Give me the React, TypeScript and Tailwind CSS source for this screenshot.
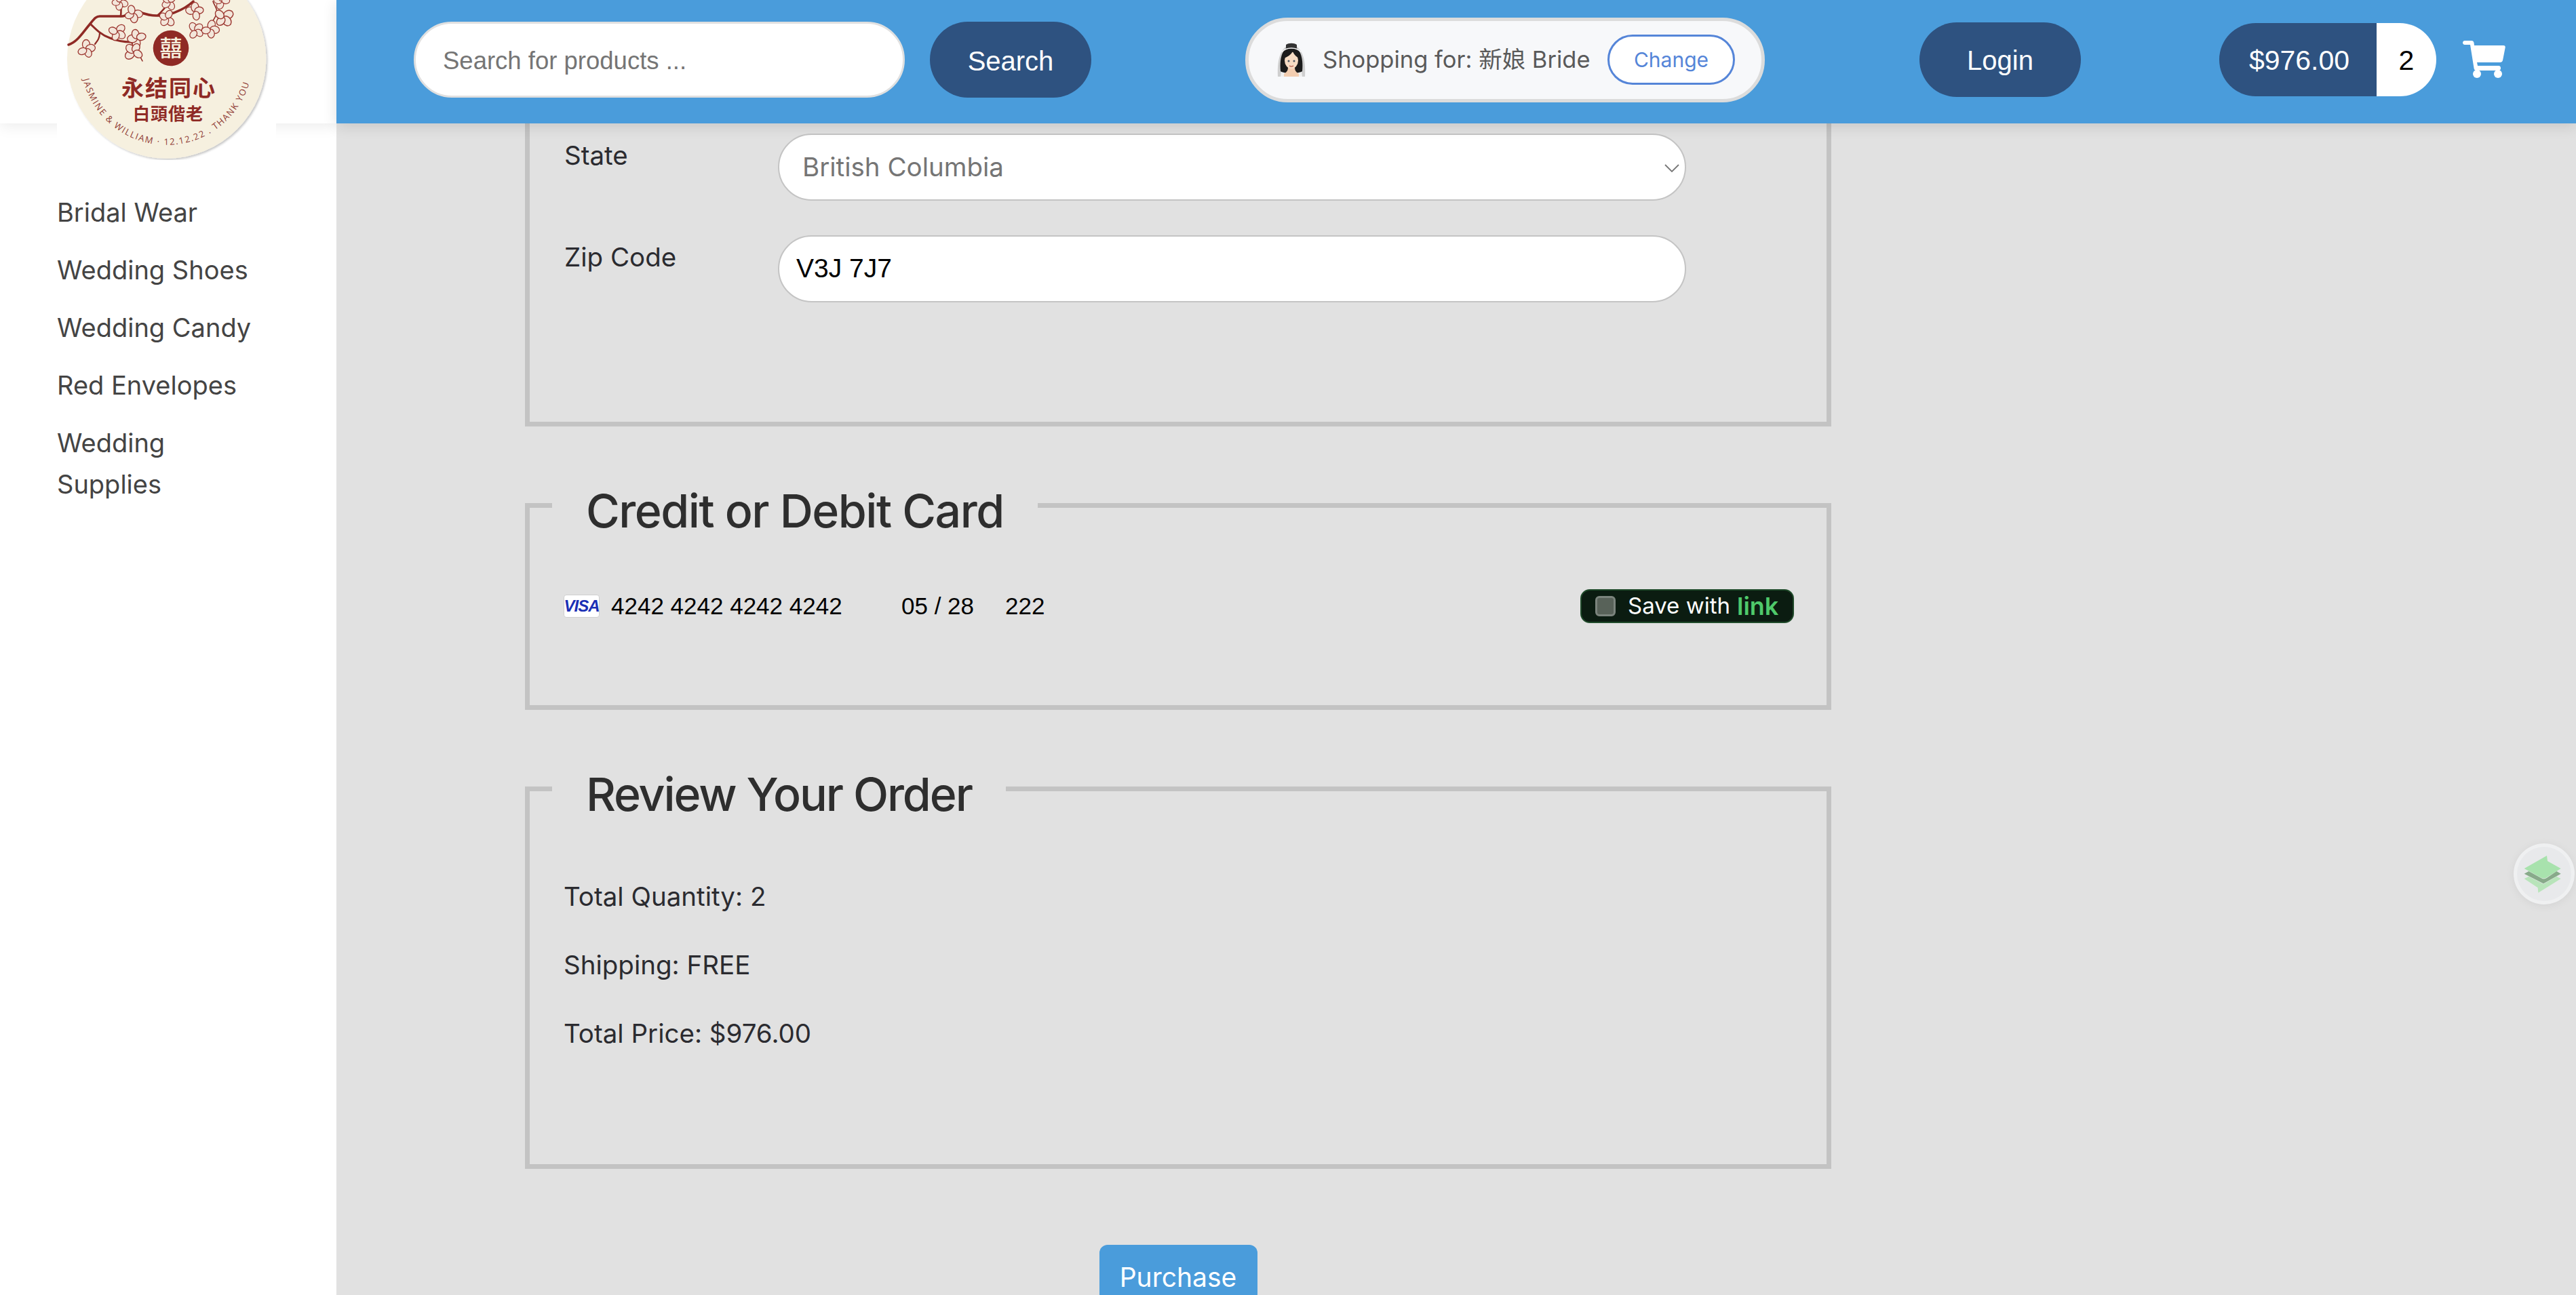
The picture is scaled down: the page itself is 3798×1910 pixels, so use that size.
// Round sticker logo, cropped by the top of the page
function WeddingLogo() {
  const branch = '#8f2a25';
  const flowers: [number, number, number][] = [
    [43, 72, 1], [89, 47, 1], [113, 20, 1], [163, 27, 0.95], [118, 57, 1.05], [113, 77, 1.05],
    [203, 17, 1], [204, 45, 0.95], [226, 43, 1], [246, 25, 1.1], [93, 3, 0.9], [166, 3, 0.9], [243, 2, 0.9],
  ];
  return (
    <svg viewBox="0 0 323 236" className="h-[236px] w-[323px]">
      <defs>
        <filter id="logoShadow" x="-10%" y="-10%" width="120%" height="120%">
          <feDropShadow dx="2" dy="2" stdDeviation="1.5" floodColor="#000" floodOpacity="0.22" />
        </filter>
        <path id="rimText" d="M 38.3 117 A 127 127 0 0 0 288.4 95" fill="none" />
      </defs>
      <circle cx="161.7" cy="87" r="146.7" fill="#f6f0df" filter="url(#logoShadow)" />
      {/* branches */}
      <g fill="none" stroke={branch} strokeLinecap="round" strokeLinejoin="round">
        <path d="M17 66 C30 62 38 48 49 35 C54 29 57 24 63 24 L96 24 C104 24 110 14 119 17 C128 20 138 24 149 23 C162 24 186 16 201 2" strokeWidth="3.5" />
        <path d="M49 35 C58 44 66 52 78 56 C88 60 98 62 109 62" strokeWidth="3" />
        <path d="M63 49 C63 56 60 60 56 65" strokeWidth="2.2" />
        <path d="M94 24 C95 16 94 12 95 6 M149 22 C156 16 160 10 166 3" strokeWidth="2.6" />
        <path d="M109 62 C114 68 118 74 126 90 M229 33 C232 26 236 22 236 18 C236 12 232 8 230 2" strokeWidth="1.6" />
      </g>
      {/* blossoms */}
      <g fill="#f3e6da" stroke="#9c3831" strokeWidth="1.3">
        {flowers.map(([x, y, s], i) => (
          <g key={i} transform={`translate(${x} ${y}) scale(${s}) rotate(${i * 47})`}>
            <ellipse cx="0" cy="-6.5" rx="5.5" ry="7" />
            <ellipse cx="6.5" cy="-1" rx="5.5" ry="7" transform="rotate(80 6.5 -1)" />
            <ellipse cx="3" cy="6" rx="5" ry="6.5" transform="rotate(160 3 6)" />
            <ellipse cx="-5.5" cy="3.5" rx="5" ry="6.5" transform="rotate(250 -5.5 3.5)" />
          </g>
        ))}
      </g>
      <circle cx="168" cy="71" r="26.3" fill="#8f2a25" />
      <text x="168" y="83" textAnchor="middle" fontSize="33" fontWeight="500" fill="#f6f0df" className="font-['Noto_Sans_CJK_TC',sans-serif]">囍</text>
      <text x="165" y="142" textAnchor="middle" fontSize="33" fontWeight="700" letterSpacing="2" fill="#8f2a25" className="font-['Noto_Sans_CJK_TC',sans-serif]">永结同心</text>
      <text x="164" y="177" textAnchor="middle" fontSize="25" fontWeight="700" letterSpacing="1" fill="#8f2a25" className="font-['Noto_Sans_CJK_TC',sans-serif]">白頭偕老</text>
      <text fontSize="13" letterSpacing="1.7" fontWeight="500" fill="#8f3a34" className="font-['Open_Sans',sans-serif]">
        <textPath href="#rimText">JASMINE &amp; WILLIAM · 12.12.22 . THANK YOU</textPath>
      </text>
    </svg>
  );
}

function BrideEmoji() {
  return (
    <svg viewBox="0 0 44 50" className="h-[50px] w-[44px] shrink-0">
      <path d="M2 50 C1 30 3 8 22 1 C41 8 43 30 42 50 Z" fill="#cfcfcf" />
      <path d="M6 50 L38 50 L37 42 L7 42 Z" fill="#f0f0f0" />
      <path d="M6 42 C4 20 10 6 22 5 C34 6 40 20 38 42 C34 46 10 46 6 42 Z" fill="#1c1c1c" />
      <path d="M14 3 C18 0 26 0 30 3 L30 9 L14 9 Z" fill="#333333" />
      <path d="M8 14 C14 6 30 6 36 14" fill="none" stroke="#f5f5f5" strokeWidth="1.6" />
      <path d="M11 46 C16 43 17 40 17 36 L27 36 C27 40 28 43 33 46 L33 50 L11 50 Z" fill="#f2cdb0" />
      <ellipse cx="22" cy="26" rx="10" ry="12.5" fill="#f7dcc4" />
      <path d="M11 23 C16 21 21 18 24 13 C26 18 30 21 33 23 L33 12 L11 12 Z" fill="#1c1c1c" />
      <circle cx="18" cy="27" r="1.5" fill="#4a5560" />
      <circle cx="26" cy="27" r="1.5" fill="#4a5560" />
      <path d="M19 34 Q22 36 25 34" stroke="#c0705f" strokeWidth="1.6" fill="none" />
    </svg>
  );
}

function CartIcon() {
  return (
    <svg viewBox="0 0 63 55" className="-mt-[1px] ml-[39px] h-[55px] w-[63px] fill-white">
      <path d="M3 0 H13 C15 0 16 1 16.5 3 L17 7 H60 C62 7 63 8 62.7 10 L59 29 C58.5 31 57 32 55 32 H21 L22 37 H53 C55 37 56 38.5 56 40.5 C56 42.5 55 44 53 44 H20 C18 44 17 43 16.6 41 L11 6 H3 C1 6 0 4.5 0 3 C0 1.5 1 0 3 0 Z" />
      <circle cx="21" cy="49" r="6" />
      <circle cx="52" cy="49" r="6" />
    </svg>
  );
}

// Stacked layers badge floating on the right edge
function LayersWidget() {
  return (
    <div className="absolute left-[3706px] top-[1244px] flex h-[90px] w-[90px] items-center justify-center rounded-full bg-[#eff0f1] shadow-[0_2px_14px_rgba(0,0,0,0.06)]">
      <div className="h-[80px] w-[80px] rounded-full bg-[#e8e9eb]">
        <svg viewBox="153 87 240 240" className="h-[80px] w-[80px]">
          <path d="M185 228 L205 218 L270 252 L328 218 L347 228 L247 290 L245 268 Z" fill="#b8e4ba" />
          <path d="M185 206 L205 195 L265 228 C272 230 278 228 285 224 L328 195 L347 206 L270 250 Z" fill="#88aa8a" />
          <path d="M185 183 L285 126 L288 150 L347 183 L285 222 C278 227 270 228 262 225 Z" fill="#a8e2ad" />
        </svg>
      </div>
    </div>
  );
}

function FormRow({ label, children }: { label: string; children: React.ReactNode }) {
  return (
    <div className="flex items-start">
      <label className="w-[315px] pt-[7px] text-[38.5px] leading-[50px] text-[#2b2b30]">{label}</label>
      {children}
    </div>
  );
}

export default function App() {
  const navItems = ['Bridal Wear', 'Wedding Shoes', 'Wedding Candy', 'Red Envelopes'];

  return (
    <div className="relative flex h-[1910px] w-[3798px] overflow-hidden bg-white font-['Inter',sans-serif]">
      {/* Sidebar */}
      <aside className="w-[496px] shrink-0 bg-white">
        <div className="h-[182px] shadow-[0_4px_20px_rgba(0,0,0,0.08)]" />
        <div className="absolute left-[84px] top-0 z-20 bg-white pb-[10px]">
          <WeddingLogo />
        </div>
        <nav className="flex flex-col gap-[24px] pl-[84px] pr-[100px] pt-[101px] text-[38px] leading-[61px] text-[#444444]">
          {navItems.map((item) => (
            <a key={item}>{item}</a>
          ))}
          <a>Wedding Supplies</a>
        </nav>
      </aside>

      <div className="flex min-w-0 flex-1 flex-col bg-[#e1e1e1]">
        {/* Top bar */}
        <header className="relative z-10 flex h-[182px] shrink-0 items-center bg-[#4a9cdb] pb-[6px] font-['Liberation_Sans',sans-serif] shadow-[0_4px_20px_rgba(0,0,0,0.12)]">
          <input
            readOnly
            placeholder="Search for products ..."
            className="ml-[114px] h-[112px] w-[724px] rounded-[56px] border-[3px] border-[#e0e0e0] bg-white pl-[40px] pt-[3px] text-[36.5px] outline-none placeholder:text-[#757575]"
          />
          <button className="ml-[37px] h-[112px] w-[238px] rounded-[56px] bg-[#2e5280] pt-[3px] text-[40px] text-white">Search</button>

          <div className="ml-[227px] flex h-[125px] w-[766px] items-center rounded-[63px] border-[5px] border-[#dcdcdc] bg-[#f7f8fa] pl-[41px] font-['Inter','Noto_Sans_CJK_SC',sans-serif]">
            <BrideEmoji />
            <span className="ml-[24px] w-[420px] whitespace-nowrap text-[34.5px] text-[#5a5a5a]">Shopping for: 新娘 Bride</span>
            <button className="h-[74px] w-[188px] rounded-[37px] border-[3px] border-[#5585d8] bg-white text-[30px] text-[#5585d8]">Change</button>
          </div>

          <button className="ml-[228px] h-[110px] w-[238px] rounded-[55px] bg-[#2e5280] pt-[2px] text-[40px] text-white">Login</button>

          <div className="ml-[204px] flex h-[108px] w-[320px] overflow-hidden rounded-[54px] text-[41px]">
            <span className="flex w-[232px] items-center justify-center bg-[#2e5280] pl-[4px] pt-[3px] text-white">$976.00</span>
            <span className="flex flex-1 items-center justify-center bg-white pt-[3px] text-black">2</span>
          </div>
          <CartIcon />
        </header>

        {/* Checkout form, scrolled past the top of the first panel */}
        <main className="ml-[278px] min-h-0 w-[1926px] flex-1 overflow-hidden">
          <fieldset className="-mt-[60px] h-[507px] border-[7px] border-[#c3c3c3] pl-[51px] pt-[68px]">
            <div className="flex flex-col gap-[51px]">
              <FormRow label="State">
                <div className="relative flex h-[99px] w-[1339px] items-center rounded-[50px] border-[2px] border-[#c4c4c4] bg-white pl-[34px] text-[38.5px] text-[#757575]">
                  British Columbia
                  <svg viewBox="0 0 22 12" className="absolute right-[8px] top-[43px] h-[12px] w-[22px]">
                    <path d="M1 1 L11 11 L21 1" fill="none" stroke="#777777" strokeWidth="1.8" />
                  </svg>
                </div>
              </FormRow>
              <FormRow label="Zip Code">
                <div className="flex h-[99px] w-[1339px] items-center rounded-[50px] border-[2px] border-[#c4c4c4] bg-white pl-[25px] font-['Liberation_Sans',sans-serif] text-[39px] text-black">
                  V3J 7J7
                </div>
              </FormRow>
            </div>
          </fieldset>

          <fieldset className="mt-[67px] h-[351px] border-[7px] border-[#c3c3c3]">
            <legend className="ml-[33px] px-[50px] pt-[16px] text-[68px] font-medium leading-[82px] tracking-[-1.5px] text-[#2e2e2e]">Credit or Debit Card</legend>
            <div className="mt-[75px] flex h-[50px] items-center pl-[50px] pr-[48px]">
              <span className="flex h-[34px] w-[53px] items-center justify-center rounded-[4px] border border-[#cfcfcf] bg-white font-['Liberation_Sans',sans-serif] text-[24px] font-bold italic leading-none tracking-[-1px] text-[#1a2fb5]">VISA</span>
              <span className="ml-[17px] w-[428px] font-['Liberation_Sans',sans-serif] text-[35px] text-black">4242 4242 4242 4242</span>
              <span className="w-[153px] font-['Liberation_Sans',sans-serif] text-[35px] text-black">05 / 28</span>
              <span className="font-['Liberation_Sans',sans-serif] text-[35px] text-black">222</span>
              <div className="ml-auto flex h-[50px] w-[315px] items-center rounded-[14px] border-[2px] border-[#1f4a2a] bg-[#0b1c11] pl-[20px] text-[33px]">
                <span className="h-[30px] w-[30px] rounded-[6px] border-[3px] border-[#7b847d] bg-[#586259]" />
                <span className="ml-[18px] text-white">Save with</span>
                <span className="ml-[10px] text-[36px] font-semibold text-[#4fc96b]">link</span>
              </div>
            </div>
          </fieldset>

          <fieldset className="mt-[67px] h-[610px] border-[7px] border-[#c3c3c3]">
            <legend className="ml-[33px] px-[50px] pt-[16px] text-[68px] font-medium leading-[82px] tracking-[-2.1px] text-[#2e2e2e]">Review Your Order</legend>
            <div className="mt-[85px] flex flex-col gap-[51px] pl-[50px] text-[38.5px] leading-[50px] text-[#2b2b30]">
              <p>Total Quantity: 2</p>
              <p>Shipping: FREE</p>
              <p>Total Price: $976.00</p>
            </div>
          </fieldset>

          <div className="mt-[112px] flex justify-center">
            <button className="h-[108px] w-[233px] rounded-[12px] bg-[#4a9cdb] pb-[12px] text-[39px] leading-[50px] text-white">Purchase</button>
          </div>
        </main>
      </div>

      <LayersWidget />
    </div>
  );
}
